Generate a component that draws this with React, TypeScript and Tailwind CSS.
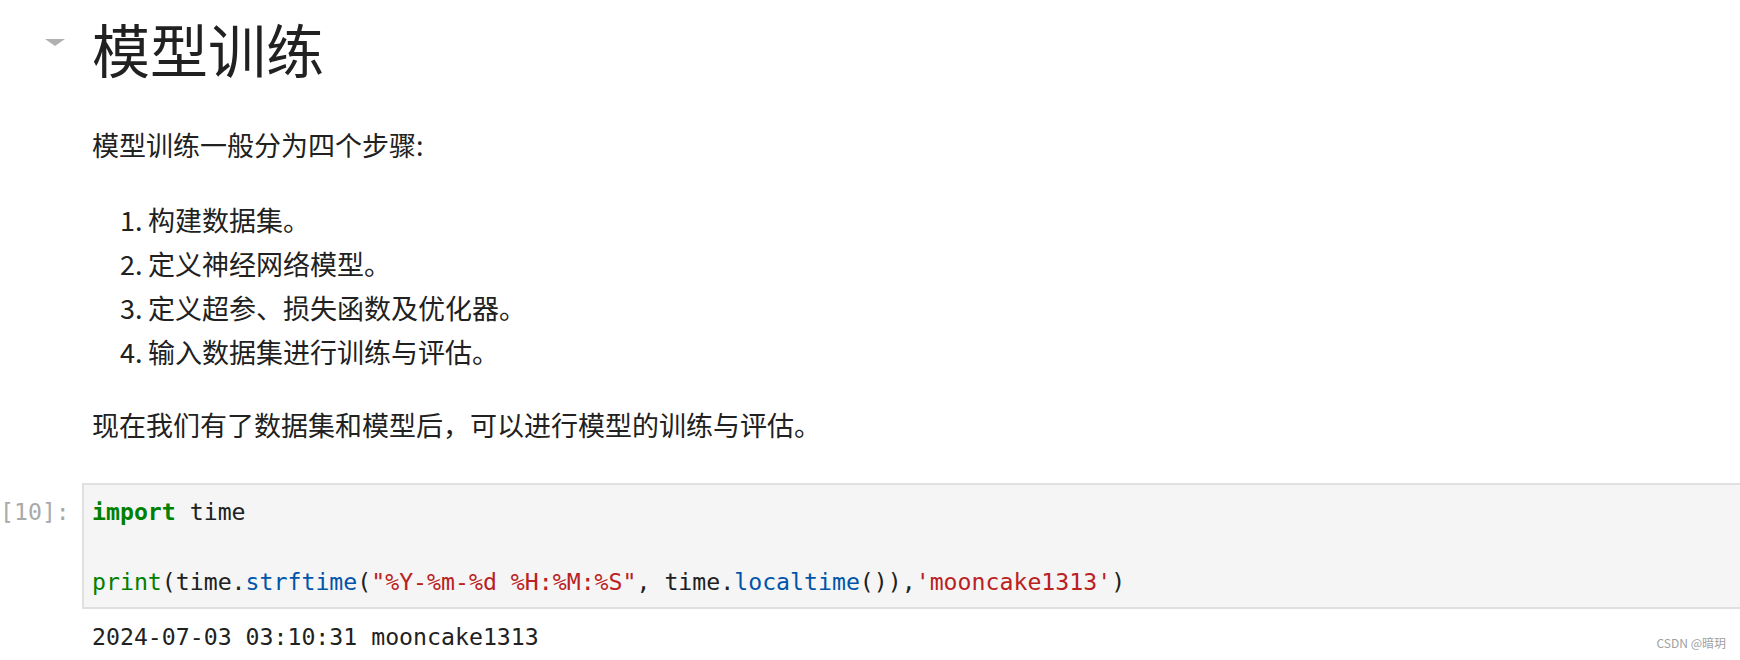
import React from "react";

const steps = ["构建数据集。", "定义神经网络模型。", "定义超参、损失函数及优化器。", "输入数据集进行训练与评估。"];

const cjk = { fontFamily: '"Noto Sans CJK SC", "Noto Sans", sans-serif' };
const mono = { fontFamily: '"DejaVu Sans Mono", "Liberation Mono", monospace' };

export default function App() {
  return (
    <div className="relative w-full h-[660px] bg-white overflow-hidden text-[#212121]" style={cjk}>
      {/* markdown cell */}
      <div className="flex">
        <div className="w-[82px] shrink-0 pt-[39px] pl-[45px]">
          <svg width="20" height="8" viewBox="0 0 20 8">
            <path d="M0 0 L20 0 L10 7 Z" fill="#b0b0b0" />
          </svg>
        </div>
        <div className="pl-[10px]">
          <h1 className="mt-[19px] text-[58px] leading-[58px] font-normal">模型训练</h1>
          <p className="mt-[46px] text-[27px] leading-[44px]">模型训练一般分为四个步骤:</p>
          <ol className="mt-[31px] text-[27px] leading-[44px]">
            {steps.map((s, i) => (
              <li key={i} className="flex">
                <span className="w-[28px] ml-[28px] shrink-0">{i + 1}.</span>
                <span>{s}</span>
              </li>
            ))}
          </ol>
          <p className="mt-[29px] text-[27px] leading-[44px]">现在我们有了数据集和模型后，可以进行模型的训练与评估。</p>
        </div>
      </div>

      {/* code cell */}
      <div className="flex mt-[36px] text-[23.2px] leading-[35px]" style={mono}>
        <div className="w-[82px] shrink-0 pt-[11px] pr-[14px] text-right text-[#a9a9a9]">[10]:</div>
        <div className="flex-1 min-w-0">
          <div className="bg-[#f5f5f5] border-2 border-r-0 border-[#e0e0e0] pl-[8px] pt-[9px] pb-[8px] whitespace-pre">
            <div>
              <span className="text-[#008000] font-bold">import</span> time
            </div>
            <div>&nbsp;</div>
            <div>
              <span className="text-[#008000]">print</span>(time.<span className="text-[#0055aa]">strftime</span>(
              <span className="text-[#ba2121]">"%Y-%m-%d %H:%M:%S"</span>, time.
              <span className="text-[#0055aa]">localtime</span>()),
              <span className="text-[#ba2121]">'mooncake1313'</span>)
            </div>
          </div>
          <div className="pl-[10px] mt-[10px] whitespace-pre">2024-07-03 03:10:31 mooncake1313</div>
        </div>
      </div>

      <div className="absolute right-[14px] bottom-[10px] text-[12px] leading-[14px] text-[#a0a0a0]" style={cjk}>
        CSDN @暗玥
      </div>
    </div>
  );
}
